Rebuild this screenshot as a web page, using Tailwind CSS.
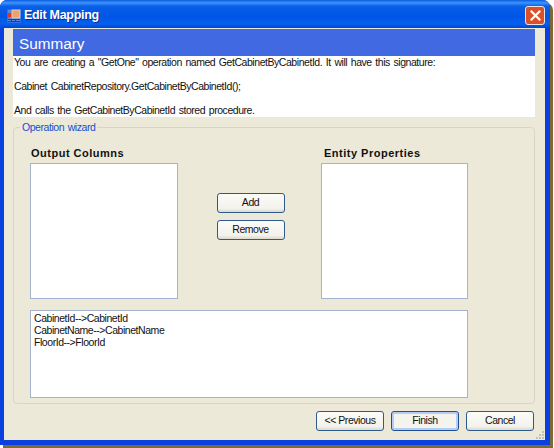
<!DOCTYPE html>
<html lang='en'>
<head>
  <meta charset='UTF-8'/>
  <title>Edit Mapping</title>
  <script src="https://cdn.jsdelivr.net/npm/@tailwindcss/browser@4"></script>
</head>
<body class='bg-white'>
  <div class='w-[554px] h-[448px] bg-white overflow-hidden font-["Liberation_Sans",sans-serif] text-[10.5px] tracking-[-0.45px] [word-spacing:1.15px] text-[#111]'>
    <!-- window with its brown shadow -->
    <div class='w-[550px] h-[445px] flex flex-col bg-[#0a3fe0] rounded-t-[7px] shadow-[3px_3px_0_#7a6a3a] overflow-hidden'>
      <!-- title bar -->
      <div class='h-[28px] shrink-0 flex items-center pt-[3px] pl-[7px] pr-[5px] gap-[3px] bg-[linear-gradient(180deg,#0a5be0_0%,#3d95fb_10%,#0a5fe8_22%,#0055e5_60%,#0560ee_85%,#0044d0_100%)]'>
        <svg width='14' height='14' viewBox='0 0 14 14' class='shrink-0'>
          <rect x='0.5' y='0.5' width='13' height='13' fill='#5c86d8'/>
          <rect x='5' y='1' width='8' height='8' fill='#f0a070' stroke='#e8e4d0' stroke-width='0.7'/>
          <rect x='1' y='4' width='3' height='4' fill='#d83a20'/>
          <path d='M1 10.5h12M1 12.5h12M4.5 10v3M8.5 10v3' stroke='#24408c' stroke-width='1'/>
        </svg>
        <span class='font-bold text-[12.5px] tracking-[-0.3px] [word-spacing:0px] text-white [text-shadow:1px_1px_0_#0a2f9c]'>Edit Mapping</span>
        <div class='ml-auto w-[20px] h-[19px] rounded-[3px] border border-[#e8e4e0] bg-[#d9502a] flex items-center justify-center'>
          <svg width='11' height='11' viewBox='0 0 11 11'>
            <path d='M1.5 1.5L9.5 9.5M9.5 1.5L1.5 9.5' stroke='#fff' stroke-width='2.2' stroke-linecap='square'/>
          </svg>
        </div>
      </div>

      <!-- dialog body -->
      <div class='relative ml-[4px] mr-[5px] mb-[5px] flex-1 min-h-0 bg-[#ece9d8] pl-[9px] pr-[10px] pt-[1px] flex flex-col'>
        <div class='h-[27px] shrink-0 bg-[#4169e1] text-white text-[15.3px] tracking-normal leading-[27px] pl-[6px] pt-[1px]'>Summary</div>
        <div class='h-[61px] shrink-0 bg-white pl-[1px] leading-[13px]'>
          <p>You are creating a "GetOne" operation named GetCabinetByCabinetId. It will have this signature:</p>
          <p class='mt-[11px]'>Cabinet CabinetRepository.GetCabinetByCabinetId();</p>
          <p class='mt-[11px]'>And calls the GetCabinetByCabinetId stored procedure.</p>
        </div>

        <!-- operation wizard group -->
        <div class='relative mt-[10px] h-[277px] shrink-0 border border-[#d8d5c4] rounded-[4px] pl-[16px] pt-[18px]'>
          <span class='absolute left-[6px] top-[-7px] bg-[#ece9d8] px-[2px] text-[#1450d0] leading-[13px]'>Operation wizard</span>
          <div class='flex'>
            <div class='w-[148px]'>
              <div class='h-[17px] font-bold text-[11px] tracking-[0.5px] [word-spacing:0px] leading-[14px] pl-[1px]'>Output Columns</div>
              <div class='h-[136px] bg-white border border-[#a5b3cf]'></div>
            </div>
            <div class='w-[143px] flex flex-col items-center pt-[47px] pl-[2px] gap-[7px]'>
              <button class='w-[68px] h-[20px] rounded-[3px] border border-[#2f5a8c] bg-[linear-gradient(180deg,#fbfbf8,#f3f2ec_80%,#dcd9cc)]'>Add</button>
              <button class='w-[68px] h-[20px] rounded-[3px] border border-[#2f5a8c] bg-[linear-gradient(180deg,#fbfbf8,#f3f2ec_80%,#dcd9cc)]'>Remove</button>
            </div>
            <div class='w-[147px]'>
              <div class='h-[17px] font-bold text-[11px] tracking-[0.5px] [word-spacing:0px] leading-[14px] pl-[3px]'>Entity Properties</div>
              <div class='h-[136px] bg-white border border-[#a5b3cf]'></div>
            </div>
          </div>
          <div class='w-[438px] h-[88px] mt-[11px] bg-white border border-[#a5b3cf] pl-[3px] pt-[1px] leading-[12px]'>
            <div>CabinetId--&gt;CabinetId</div>
            <div>CabinetName--&gt;CabinetName</div>
            <div>FloorId--&gt;FloorId</div>
          </div>
        </div>

        <!-- bottom buttons -->
        <div class='flex justify-end gap-[7px] mt-[7px] pr-[1px]'>
          <button class='w-[68px] h-[20px] rounded-[3px] border border-[#2f5a8c] bg-[linear-gradient(180deg,#fbfbf8,#f3f2ec_80%,#dcd9cc)]'>&lt;&lt; Previous</button>
          <button class='w-[68px] h-[20px] rounded-[3px] border border-[#1f4f96] bg-[#f4f3ee] shadow-[inset_0_0_0_2px_#b5cdf0]'>Finish</button>
          <button class='w-[68px] h-[20px] rounded-[3px] border border-[#2f5a8c] bg-[linear-gradient(180deg,#fbfbf8,#f3f2ec_80%,#dcd9cc)]'>Cancel</button>
        </div>

        <!-- resize grip -->
        <svg width='10' height='10' viewBox='0 0 10 10' class='absolute right-0 bottom-0'>
          <path d='M7 1h2v2h-2zM4 4h2v2h-2zM7 4h2v2h-2zM1 7h2v2h-2zM4 7h2v2h-2zM7 7h2v2h-2z' fill='#c4c1ae'/>
        </svg>
      </div>
    </div>
  </div>
</body>
</html>
